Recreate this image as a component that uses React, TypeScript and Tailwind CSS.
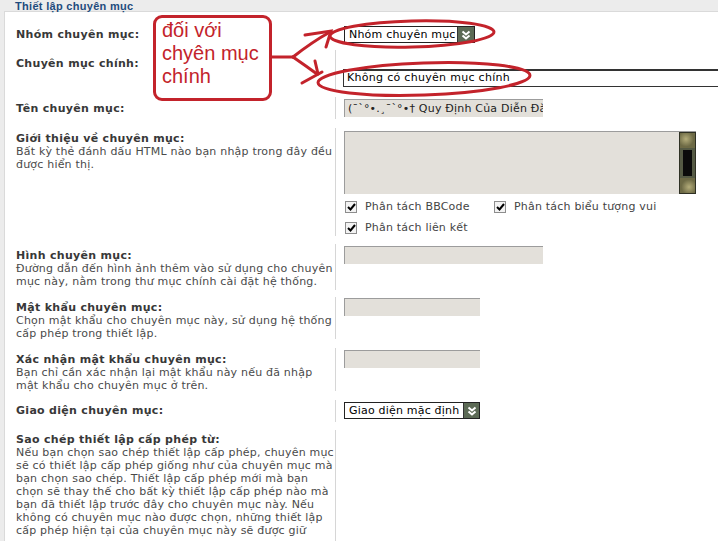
import React from 'react'

const RED = '#c3232b'

function Arrow({ w }: { w: string }) {
  return (
    <span className={`flex h-full ${w} items-center justify-center bg-[#5c6a55] border-l border-[#333]`}>
      <svg width="10" height="10" viewBox="0 0 10 10">
        <polyline points="1.5,1.5 5,4.5 8.5,1.5" fill="none" stroke="#fff" strokeWidth="2" />
        <polyline points="1.5,5.5 5,8.5 8.5,5.5" fill="none" stroke="#fff" strokeWidth="2" />
      </svg>
    </span>
  )
}

function Select({ text, className, arrowW }: { text: string; className: string; arrowW: string }) {
  return (
    <div className={`flex items-stretch bg-white border border-[#222] ${className}`}>
      <span className="flex-1 overflow-hidden whitespace-nowrap pl-[4px] text-[11px] leading-[15px] tracking-[0.2px] text-black">{text}</span>
      <Arrow w={arrowW} />
    </div>
  )
}

function Input({ w, value }: { w: string; value?: string }) {
  return (
    <div className={`${w} h-[18px] overflow-hidden whitespace-nowrap bg-[#e3e0da] border-t border-l border-[#9c9c9c] pl-[3px] text-[11px] leading-[17px] tracking-[0.2px] text-[#222]`}>
      {value}
    </div>
  )
}

function Check({ label }: { label: string }) {
  return (
    <div className="flex items-center gap-[8px]">
      <span className="flex h-[12px] w-[12px] items-center justify-center border border-[#8d8d8d] bg-[#f3f3f3]">
        <svg width="9" height="8" viewBox="0 0 9 8">
          <polyline points="1,4 3.5,6.5 8,1" fill="none" stroke="#000" strokeWidth="2" />
        </svg>
      </span>
      <span className="text-[11px] leading-[13px] tracking-[0.2px] text-[#444]">{label}</span>
    </div>
  )
}

function Row({
  h,
  mt,
  lpt,
  fpt,
  title,
  desc,
  divider = true,
  children,
}: {
  h?: string
  mt: string
  lpt: string
  fpt: string
  title: string
  desc?: string[]
  divider?: boolean
  children?: React.ReactNode
}) {
  return (
    <div className={`flex ${h ?? ''} ${mt}`}>
      <div className={`w-[331px] shrink-0 pl-[11px] ${lpt} ${divider ? 'border-r border-[#d6d6d6]' : 'border-r border-transparent'}`}>
        <div className="text-[11px] leading-[13px] font-bold tracking-[0.3px] text-[#383838]">{title}</div>
        {desc && (
          <div className="text-[11px] leading-[13px] tracking-[0.2px] text-[#4a4a4a] whitespace-nowrap">
            {desc.map((d, i) => (
              <div key={i}>{d}</div>
            ))}
          </div>
        )}
      </div>
      <div className={`flex-1 pl-[8px] ${fpt}`}>{children}</div>
    </div>
  )
}

export default function App() {
  return (
    <div className="relative h-[541px] w-[718px] overflow-hidden bg-[#ececec] font-['DejaVu_Sans','Verdana',sans-serif]">
      <div className="relative z-10 h-[11px] pl-[15px] text-[11px] leading-[13px] font-bold tracking-[0.3px] text-[#1e4b7d] font-['Liberation_Sans',Arial,sans-serif]">
        Thiết lập chuyên mục
      </div>
      <div className="ml-[4px] h-[530px] border-l border-t border-[#dadada] bg-white pt-[10px]">
        <Row h="h-[24px]" mt="mt-0" lpt="pt-[6px]" fpt="pt-[4px]" title="Nhóm chuyên mục:" divider={false}>
          <Select text="Nhóm chuyên mục" className="h-[17px] w-[131px]" arrowW="w-[17px]" />
        </Row>
        <Row h="h-[41px]" mt="mt-[4px]" lpt="pt-[7px]" fpt="pt-[19px]" title="Chuyên mục chính:">
          <div className="-ml-[1px] h-[18px] border-t-2 border-l border-b border-[#333] bg-white pl-[3px] text-[11px] leading-[14px] tracking-[0.3px] text-black whitespace-nowrap">
            Không có chuyên mục chính
          </div>
        </Row>
        <Row h="h-[22px]" mt="mt-[6px]" lpt="pt-[5px]" fpt="pt-[2px]" title="Tên chuyên mục:">
          <Input w="w-[199px]" value="(¯`°•.¸¯`°•† Quy Định Của Diễn Đàn" />
        </Row>
        <Row
          h="h-[108px]"
          mt="mt-[9px]"
          lpt="pt-[4px]"
          fpt="pt-[3px]"
          title="Giới thiệu về chuyên mục:"
          desc={['Bất kỳ thẻ đánh dấu HTML nào bạn nhập trong đây đều', 'được hiển thị.']}
        >
          <div className="flex h-[63px] w-[352px] border-t border-l border-[#9c9c9c] bg-[#e3e0da]">
            <div className="flex-1" />
            <div className="flex w-[17px] flex-col border border-[#2f3124] bg-[#2f3124]">
              <div className="h-[15px] bg-[#7f7c52] bg-[radial-gradient(circle_at_40%_40%,#b4ad7a_0,#6d6a45_60%)]" />
              <div className="flex-1 border-x-[3px] border-y-[2px] border-[#555a44] bg-[#0b0b0b]" />
              <div className="h-[15px] bg-[#7f7c52] bg-[radial-gradient(circle_at_60%_60%,#b4ad7a_0,#6d6a45_60%)]" />
            </div>
          </div>
          <div className="mt-[6px] flex">
            <div className="w-[150px] pl-[1px]">
              <Check label="Phân tách BBCode" />
            </div>
            <Check label="Phân tách biểu tượng vui" />
          </div>
          <div className="mt-[8px] pl-[1px]">
            <Check label="Phân tách liên kết" />
          </div>
        </Row>
        <Row
          h="h-[46px]"
          mt="mt-[8px]"
          lpt="pt-[5px]"
          fpt="pt-[2px]"
          title="Hình chuyên mục:"
          desc={['Đường dẫn đến hình ảnh thêm vào sử dụng cho chuyên', 'mục này, nằm trong thư mục chính cài đặt hệ thống.']}
        >
          <Input w="w-[199px]" />
        </Row>
        <Row
          h="h-[42px]"
          mt="mt-[7px]"
          lpt="pt-[4px]"
          fpt="pt-[1px]"
          title="Mật khẩu chuyên mục:"
          desc={['Chọn mật khẩu cho chuyên mục này, sử dụng hệ thống', 'cấp phép trong thiết lập.']}
        >
          <Input w="w-[136px]" />
        </Row>
        <Row
          h="h-[43px]"
          mt="mt-[9px]"
          lpt="pt-[5px]"
          fpt="pt-[2px]"
          title="Xác nhận mật khẩu chuyên mục:"
          desc={['Bạn chỉ cần xác nhận lại mật khẩu này nếu đã nhập', 'mật khẩu cho chuyên mục ở trên.']}
        >
          <Input w="w-[136px]" />
        </Row>
        <Row h="h-[22px]" mt="mt-[9px]" lpt="pt-[4px]" fpt="pt-[2px]" title="Giao diện chuyên mục:">
          <Select text="Giao diện mặc định" className="h-[17px] w-[136px]" arrowW="w-[16px]" />
        </Row>
        <Row
          h="h-[112px]"
          mt="mt-[8px]"
          lpt="pt-[3px]"
          fpt="pt-0"
          title="Sao chép thiết lập cấp phép từ:"
          desc={[
            'Nếu bạn chọn sao chép thiết lập cấp phép, chuyên mục',
            'sẽ có thiết lập cấp phép giống như của chuyên mục mà',
            'bạn chọn sao chép. Thiết lập cấp phép mới mà bạn',
            'chọn sẽ thay thế cho bất kỳ thiết lập cấp phép nào mà',
            'bạn đã thiết lập trước đây cho chuyên mục này. Nếu',
            'không có chuyên mục nào được chọn, những thiết lập',
            'cấp phép hiện tại của chuyên mục này sẽ được giữ',
          ]}
        />
      </div>

      {/* hand-drawn annotation on top */}
      <div className="absolute left-[153px] top-[15px] h-[86px] w-[119px] rounded-[9px] border-[3px] border-[#c3232b] bg-white pl-[6px] pt-[1px] text-[20px] leading-[23px] text-[#c3232b] font-['Liberation_Sans',Arial,sans-serif]">
        <div>đối với</div>
        <div>chyên mục</div>
        <div>chính</div>
      </div>
      <svg className="pointer-events-none absolute inset-0" width="718" height="541" viewBox="0 0 718 541">
        <g fill="none" stroke={RED} strokeWidth="3" strokeLinecap="round">
          <ellipse cx="412" cy="34" rx="82" ry="13" transform="rotate(-1.5 412 34)" />
          <ellipse cx="424" cy="79" rx="106" ry="16" transform="rotate(-2 424 79)" />
          <path d="M271 57 L293 57" />
          <path d="M293 57 Q312 42 330 32" />
          <path d="M305 35 L331 31 L326 47" />
          <path d="M293 57 Q306 66 317 74" />
          <path d="M315 61 L318 74" />
          <path d="M302 83 L322 72" />
        </g>
      </svg>
    </div>
  )
}
